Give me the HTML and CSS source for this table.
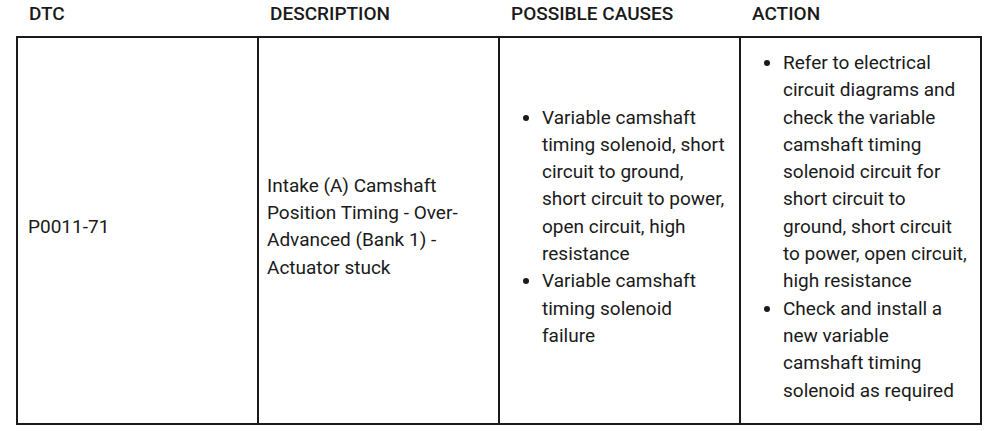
FILE: index.html
```html
<!DOCTYPE html>
<html>
<head>
<meta charset="utf-8">
<link rel="stylesheet" href="styles.css">
</head>
<body>
<table class="dtc-table">
  <colgroup>
    <col class="col">
    <col class="col">
    <col class="col">
    <col class="col">
  </colgroup>
  <thead>
    <tr>
      <th>DTC</th>
      <th>DESCRIPTION</th>
      <th>POSSIBLE CAUSES</th>
      <th>ACTION</th>
    </tr>
  </thead>
  <tbody>
    <tr>
      <td class="code">P0011-71</td>
      <td>Intake (A) Camshaft Position Timing - Over-Advanced (Bank 1) - Actuator stuck</td>
      <td class="causes">
        <ul>
          <li>Variable camshaft timing solenoid, short circuit to ground, short circuit to power, open circuit, high resistance</li>
          <li>Variable camshaft timing solenoid failure</li>
        </ul>
      </td>
      <td>
        <ul>
          <li>Refer to electrical circuit diagrams and check the variable camshaft timing solenoid circuit for short circuit to ground, short circuit to power, open circuit, high resistance</li>
          <li>Check and install a new variable camshaft timing solenoid as required</li>
        </ul>
      </td>
    </tr>
  </tbody>
</table>
</body>
</html>
```

FILE: styles.css
```css
html, body {
  margin: 0;
  padding: 0;
  background: #ffffff;
}
body {
  padding-left: 16px;
  font-family: Roboto, "Liberation Sans", sans-serif;
  color: #1a1a1a;
}
.dtc-table {
  width: 966px;
  table-layout: fixed;
  border-collapse: collapse;
}
.dtc-table th {
  height: 37px;
  padding: 0 12px;
  text-align: left;
  font-weight: 500;
  font-size: 19px;
  vertical-align: middle;
  box-sizing: border-box;
  border: none;
  padding-bottom: 9px;
}
.dtc-table td {
  border: 2px solid #1a1a1a;
  padding: 11px 8px 19px 8px;
  font-size: 19px;
  line-height: 27.3px;
  vertical-align: middle;
}
.dtc-table td.code {
  padding-left: 10px;
}
.dtc-table ul {
  margin: 0;
  padding-left: 34px;
}
.dtc-table td.causes ul {
  padding-right: 3px;
}
```
